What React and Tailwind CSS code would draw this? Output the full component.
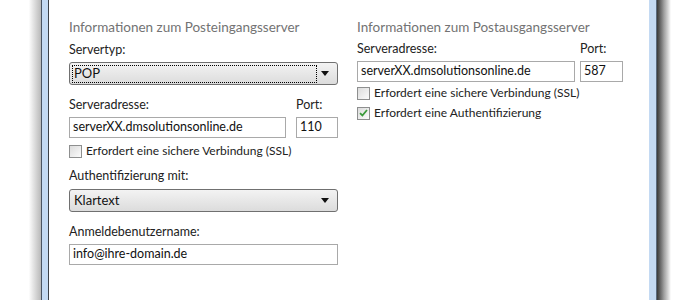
import React from "react";

const font = { fontFamily: 'Lato, "Noto Sans", sans-serif' };

function Arrow() {
  return (
    <svg width="8" height="5" viewBox="0 0 8 5" className="block">
      <path d="M0 0 H8 L4 5 Z" fill="#111" />
    </svg>
  );
}

function Select({ value, focused }) {
  return (
    <div className="h-[23px] rounded-[3px] border border-[#707070] bg-gradient-to-b from-[#f3f3f3] to-[#dcdcdc] flex items-center pl-[2px] pr-[4px]">
      <div
        className={
          "flex-1 h-[18px] flex items-center pl-[2px] " +
          (focused ? "outline outline-1 outline-dotted outline-black -outline-offset-1" : "")
        }
      >
        <span className="text-[13px] text-[#111] leading-none">{value}</span>
      </div>
      <div className="w-[16px] flex justify-center">
        <Arrow />
      </div>
    </div>
  );
}

function Input({ value, className = "" }) {
  return (
    <div className={"h-[21px] border border-[#a9a9a9] bg-white flex items-center px-[3px] " + className}>
      <span className="text-[12.5px] text-[#111] leading-none">{value}</span>
    </div>
  );
}

function Check({ label, checked }) {
  return (
    <div className="flex items-center gap-[4px] h-[20px]">
      <div className="w-[13px] h-[13px] border border-[#8e8f8f] bg-gradient-to-br from-[#dcdcdc] to-[#fbfbfb] flex items-center justify-center">
        {checked && (
          <svg width="9" height="8" viewBox="0 0 9 8">
            <path d="M1 4.2 L3.4 6.5 L8 1" stroke="#3a9a3a" strokeWidth="1.8" fill="none" />
          </svg>
        )}
      </div>
      <span className="text-[12px] text-[#222]">{label}</span>
    </div>
  );
}

export default function App() {
  return (
    <div className="w-[700px] h-[300px] bg-white flex overflow-hidden" style={font}>
      <div className="w-[41px] h-full bg-gradient-to-r from-white from-70% to-[#b9b9b9]" />
      <div className="w-[8px] h-full flex">
        <div className="w-[1px] bg-[#4b5563]" />
        <div className="flex-1 bg-[#c4daf3]" />
        <div className="w-[1px] bg-[#3c4148]" />
      </div>
      <div className="w-[600px] h-full bg-white flex pl-[20px]">
        <div className="w-[269px] flex flex-col">
          <div className="mt-[17px] h-[20px] text-[13.5px] text-[#737373]">Informationen zum Posteingangsserver</div>
          <div className="mt-[4px] h-[20px] text-[12.5px] text-[#222]">Servertyp:</div>
          <div className="mt-[1px]">
            <Select value="POP" focused />
          </div>
          <div className="mt-[11px] h-[20px] flex justify-between text-[12.5px] text-[#222]">
            <span>Serveradresse:</span>
            <span className="w-[42px]">Port:</span>
          </div>
          <div className="mt-[1px] flex gap-[10px]">
            <Input value="serverXX.dmsolutionsonline.de" className="flex-1" />
            <Input value="110" className="w-[42px]" />
          </div>
          <div className="mt-[3px]">
            <Check label="Erfordert eine sichere Verbindung (SSL)" />
          </div>
          <div className="mt-[6px] h-[20px] text-[12.5px] text-[#222]">Authentifizierung mit:</div>
          <div className="mt-[2px]">
            <Select value="Klartext" />
          </div>
          <div className="mt-[11px] h-[20px] text-[12.5px] text-[#222]">Anmeldebenutzername:</div>
          <div className="mt-[1px]">
            <Input value="info@ihre-domain.de" />
          </div>
        </div>
        <div className="w-[266px] ml-[19px] flex flex-col">
          <div className="mt-[17px] h-[20px] text-[13.5px] text-[#737373]">Informationen zum Postausgangsserver</div>
          <div className="mt-[3px] h-[20px] flex justify-between text-[12.5px] text-[#222]">
            <span>Serveradresse:</span>
            <span className="w-[43px]">Port:</span>
          </div>
          <div className="mt-[1px] flex gap-[5px]">
            <Input value="serverXX.dmsolutionsonline.de" className="flex-1" />
            <Input value="587" className="w-[43px]" />
          </div>
          <div className="mt-[1px]">
            <Check label="Erfordert eine sichere Verbindung (SSL)" />
          </div>
          <Check label="Erfordert eine Authentifizierung" checked />
        </div>
      </div>
      <div className="w-[8px] h-full flex">
        <div className="flex-1 bg-[#c4daf3]" />
        <div className="w-[1px] bg-[#5b6b7e]" />
      </div>
      <div className="w-[14px] h-full bg-gradient-to-r from-[#3a3a3a] via-[#a0a0a0] to-white" />
      <div className="flex-1 h-full bg-white" />
    </div>
  );
}
